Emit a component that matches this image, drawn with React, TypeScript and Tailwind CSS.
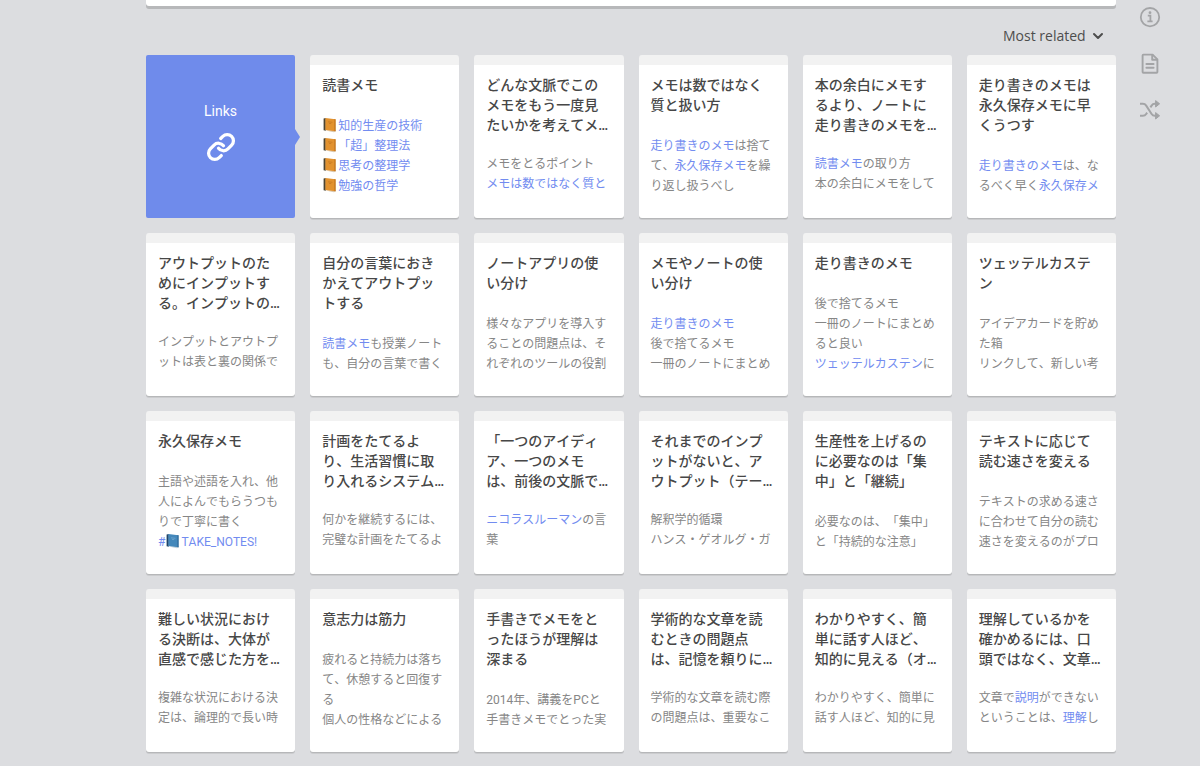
import type { ReactNode } from "react";
import { ChevronDown } from "lucide-react";

interface Note {
  title: string;
  clamped?: boolean;
  // [[...]] marks a link to another note
  body: string;
}

const notes: Note[] = [
  {
    title: "読書メモ",
    body: "[[📙知的生産の技術]]\n[[📙「超」整理法]]\n[[📙思考の整理学]]\n[[📙勉強の哲学]]",
  },
  {
    title: "どんな文脈でこのメモをもう一度見たいかを考えてメ…",
    clamped: true,
    body: "メモをとるポイント\n[[メモは数ではなく質と]]",
  },
  {
    title: "メモは数ではなく質と扱い方",
    body: "[[走り書きのメモ]]は捨てて、[[永久保存メモ]]を繰り返し扱うべし",
  },
  {
    title: "本の余白にメモするより、ノートに\n走り書きのメモを…",
    clamped: true,
    body: "[[読書メモ]]の取り方\n本の余白にメモをして",
  },
  {
    title: "走り書きのメモは永久保存メモに早くうつす",
    body: "[[走り書きのメモ]]は、なるべく早く[[永久保存メ]]",
  },
  {
    title: "アウトプットのためにインプットする。インプットの…",
    clamped: true,
    body: "インプットとアウトプットは表と裏の関係で",
  },
  {
    title: "自分の言葉におきかえてアウトプットする",
    body: "[[読書メモ]]も授業ノートも、自分の言葉で書く",
  },
  {
    title: "ノートアプリの使い分け",
    body: "様々なアプリを導入することの問題点は、それぞれのツールの役割",
  },
  {
    title: "メモやノートの使い分け",
    body: "[[走り書きのメモ]]\n後で捨てるメモ\n一冊のノートにまとめ",
  },
  {
    title: "走り書きのメモ",
    body: "後で捨てるメモ\n一冊のノートにまとめると良い\n[[ツェッテルカステン]]に",
  },
  {
    title: "ツェッテルカステン",
    body: "アイデアカードを貯めた箱\nリンクして、新しい考",
  },
  {
    title: "永久保存メモ",
    body: "主語や述語を入れ、他人によんでもらうつもりで丁寧に書く\n[[#📘TAKE_NOTES!]]",
  },
  {
    title: "計画をたてるよ\nり、生活習慣に取\nり入れるシステム…",
    clamped: true,
    body: "何かを継続するには、完璧な計画をたてるよ",
  },
  {
    title: "「一つのアイディア、一つのメモ\nは、前後の文脈で…",
    clamped: true,
    body: "[[ニコラスルーマン]]の言葉",
  },
  {
    title: "それまでのインプットがないと、アウトプット（テー…",
    clamped: true,
    body: "解釈学的循環\nハンス・ゲオルグ・ガ",
  },
  {
    title: "生産性を上げるのに必要なのは「集中」と「継続」",
    body: "必要なのは、「集中」と「持続的な注意」",
  },
  {
    title: "テキストに応じて読む速さを変える",
    body: "テキストの求める速さに合わせて自分の読む速さを変えるのがプロ",
  },
  {
    title: "難しい状況における決断は、大体が直感で感じた方を…",
    clamped: true,
    body: "複雑な状況における決定は、論理的で長い時",
  },
  {
    title: "意志力は筋力",
    body: "疲れると持続力は落ちて、休憩すると回復する\n個人の性格などによる",
  },
  {
    title: "手書きでメモをとったほうが理解は深まる",
    body: "2014年、講義をPCと手書きメモでとった実",
  },
  {
    title: "学術的な文章を読むときの問題点は、記憶を頼りに…",
    clamped: true,
    body: "学術的な文章を読む際の問題点は、重要なこ",
  },
  {
    title: "わかりやすく、簡単に話す人ほど、知的に見える（オ…",
    clamped: true,
    body: "わかりやすく、簡単に話す人ほど、知的に見",
  },
  {
    title: "理解しているかを確かめるには、口頭ではなく、文章…",
    clamped: true,
    body: "文章で[[説明]]ができないということは、[[理解]]し",
  },
];

function BookIcon({ blue }: { blue?: boolean }) {
  return (
    <svg
      viewBox="0 0 16 16"
      className="inline-block w-4 h-4 align-[-3px]"
      aria-hidden="true"
    >
      <path d="M1.6 1.4 3.8 1v12.8l-2.2-.6z" fill={blue ? "#1f4468" : "#4a4433"} />
      <path d="M3.6 13.4 12 15.2l1.6-.8V13z" fill={blue ? "#c3d0da" : "#d9c7ae"} />
      <path
        d="M3.4 1 13.4 2.2v12L3.4 13z"
        fill={blue ? "#4488bb" : "#e2922f"}
      />
      <path d="M12.4 2.1l1.2.1v12l-1.2-.2z" fill={blue ? "#2f6a99" : "#c0741f"} />
      <path
        d="M6 4.8l4.4.5M7 6.4l2.2.2"
        stroke={blue ? "#77acd3" : "#c0741f"}
        strokeWidth="0.7"
      />
    </svg>
  );
}

function withBooks(text: string): ReactNode[] {
  return text.split(/(📙|📘)/u).map((part, i) => {
    if (part === "📙") return <BookIcon key={i} />;
    if (part === "📘") return <BookIcon key={i} blue />;
    return part;
  });
}

function NoteBody({ text }: { text: string }) {
  return (
    <p className="text-xs leading-5 text-[#868686] whitespace-pre-line">
      {text.split(/\[\[(.+?)\]\]/).map((part, i) =>
        i % 2 === 1 ? (
          <a key={i} href="#" className="text-[#728cf0]">
            {withBooks(part)}
          </a>
        ) : (
          part
        )
      )}
    </p>
  );
}

function NoteCard({ note }: { note: Note }) {
  return (
    <article className="h-[163px] overflow-hidden rounded-[3px] border-t-10 border-[#f2f2f2] bg-white px-3 pt-2.5 shadow-[0_1px_0_#b6b7b9,0_2px_0_#cbccce]">
      <h2
        className={
          note.clamped
            ? "mb-[19px] text-sm leading-5 font-medium text-[#474747] whitespace-pre-line"
            : "mb-[21px] text-sm leading-5 font-medium text-[#474747]"
        }
      >
        {note.title}
      </h2>
      <NoteBody text={note.body} />
    </article>
  );
}

function LinksCard() {
  return (
    <div className="relative flex h-[163px] flex-col items-center rounded-[2px] bg-[#6f8beb] pt-[46px] text-white">
      <span className="text-sm leading-5">Links</span>
      <svg
        viewBox="0 0 24 24"
        className="mt-[11px] h-[30px] w-[30px]"
        fill="none"
        stroke="currentColor"
        strokeWidth="2.6"
        strokeLinecap="round"
        strokeLinejoin="round"
        aria-hidden="true"
      >
        <path d="M10 13a5 5 0 0 0 7.54.54l3-3a5 5 0 0 0-7.07-7.07l-1.72 1.71" />
        <path d="M14 11a5 5 0 0 0-7.54-.54l-3 3a5 5 0 0 0 7.07 7.07l1.71-1.71" />
      </svg>
      <svg
        viewBox="0 0 5 16"
        className="absolute top-[74px] left-full h-4 w-[5px]"
        aria-hidden="true"
      >
        <path d="M0 0l5 8-5 8z" fill="#6f8beb" />
      </svg>
    </div>
  );
}

function SideMenu() {
  return (
    <aside className="flex w-[84px] shrink-0 flex-col items-center gap-[22px] pt-1.5 pr-4 text-[#a3a4a6]">
      <button type="button" aria-label="Info" className="h-6 w-6">
        <svg viewBox="0 0 24 24" fill="none" stroke="currentColor">
          <circle cx="12" cy="11.2" r="9.2" strokeWidth="1.8" />
          <path d="M9.8 9.6h2.6v5.6M9.4 15.4h5.2" strokeWidth="1.8" />
          <circle cx="12" cy="6.7" r="1.4" fill="currentColor" stroke="none" />
        </svg>
      </button>
      <button type="button" aria-label="Document" className="h-6 w-6">
        <svg
          viewBox="0 0 24 24"
          fill="none"
          stroke="currentColor"
          strokeWidth="1.9"
          strokeLinejoin="round"
        >
          <path d="M14.6 2.6H5.4a.8.8 0 0 0-.8.8V20c0 .5.3.8.8.8h13.2c.5 0 .8-.3.8-.8V7.4z" />
          <path d="M14.2 2.6v5.2h5.2" />
          <path d="M8.4 12h7.2M8.4 15.8h7.2" strokeLinecap="round" />
        </svg>
      </button>
      <button type="button" aria-label="Shuffle" className="h-6 w-6">
        <svg viewBox="0 0 24 24" fill="none" stroke="currentColor" strokeWidth="2">
          <path d="M2 5.8h2.8c1.5 0 2.6.6 3.4 1.8l5.4 8.4c.8 1.2 1.8 1.8 3.2 1.8H19" />
          <path d="M2 17.8h2.8c1.5 0 2.6-.6 3.4-1.8l.9-1.4M12.4 9.4l1.2-1.8c.8-1.2 1.8-1.8 3.2-1.8H19" />
          <path
            d="M17.6 2.6 21.6 5.8l-4 3.2zM17.6 14.6l4 3.2-4 3.2z"
            fill="currentColor"
            strokeWidth="1"
            strokeLinejoin="round"
          />
        </svg>
      </button>
    </aside>
  );
}

export default function App() {
  return (
    <div
      lang="ja"
      className="flex min-h-screen bg-[#dcdde0] pl-[146px] font-[Roboto,'Noto_Sans_CJK_JP',sans-serif] [font-kerning:none] [text-spacing-trim:space-all]"
    >
      <main className="min-w-0 flex-1 pb-[14px]">
        <div className="h-1.5 rounded-b-[3px] bg-white shadow-[0_3px_0_#b7b8ba]" />

        <div className="mt-[9px] flex h-10 items-center justify-end pr-2.5">
          <div className="relative flex items-center pt-0.5 font-['Open_Sans','Noto_Sans',sans-serif] text-[#4d4d4d]">
            <select
              aria-label="Sort order"
              className="appearance-none bg-transparent pr-5 text-sm leading-5"
            >
              <option>Most related</option>
            </select>
            <ChevronDown
              strokeWidth={3}
              className="pointer-events-none absolute right-0 h-4 w-4"
            />
          </div>
        </div>

        <div className="grid grid-cols-6 gap-[15px]">
          <LinksCard />
          {notes.map((note) => (
            <NoteCard key={note.title} note={note} />
          ))}
        </div>
      </main>
      <SideMenu />
    </div>
  );
}
